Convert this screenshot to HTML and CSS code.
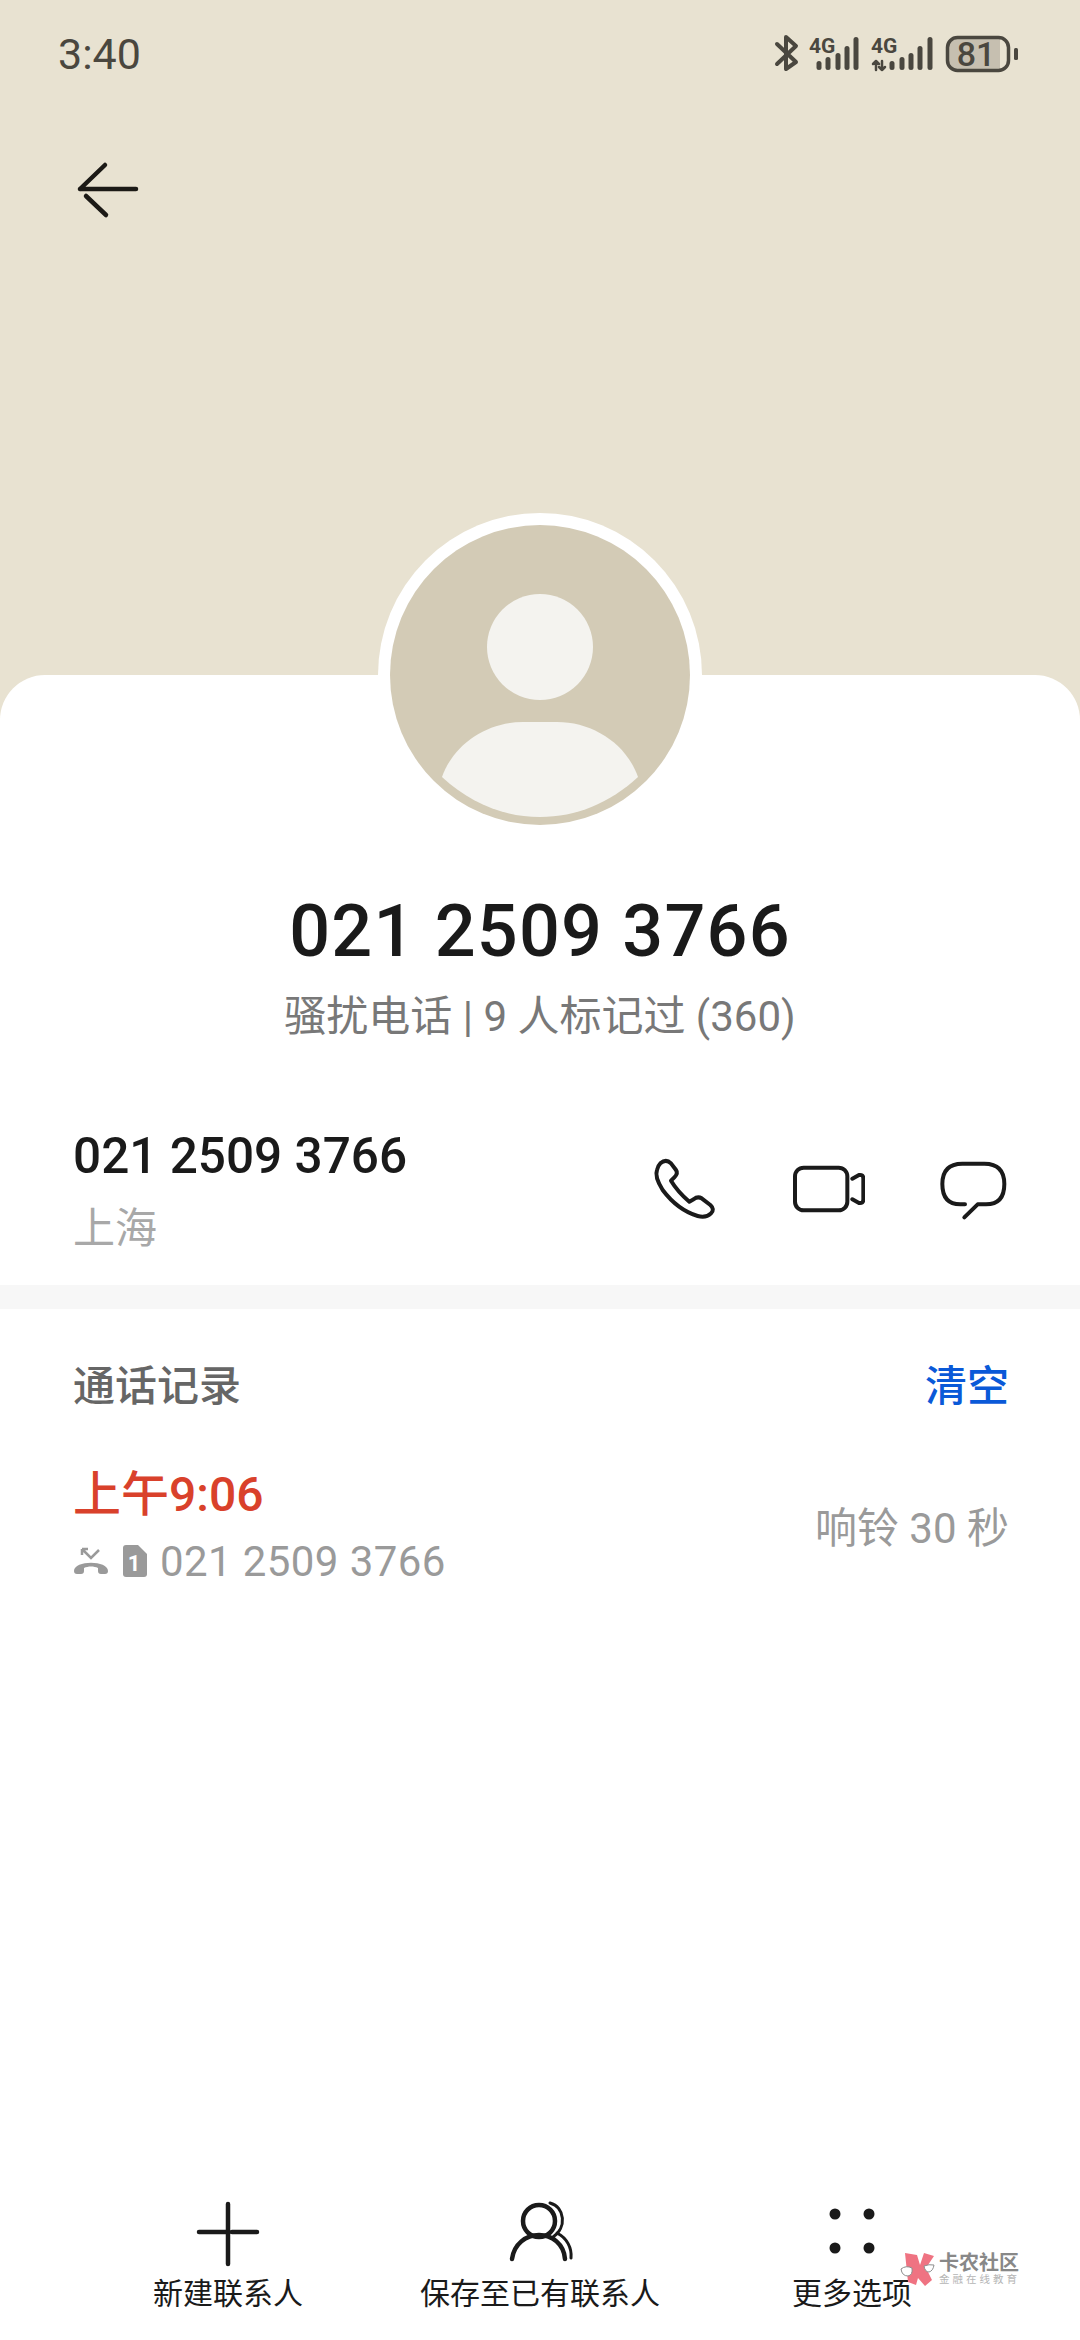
FILE: index.html
```html
<!DOCTYPE html>
<html lang="zh-CN">

<head>
    <meta charset="UTF-8">
    <meta name="viewport" content="width=device-width, initial-scale=1.0">
    <title>021 2509 3766</title>
    <link rel="stylesheet" href="styles.css">
</head>

<body>
    <div class="page">
        <header class="top">
            <div class="status">
                <span class="time">3:40</span>
                <svg class="status-icons" width="300" height="70" viewBox="740 20 300 70">
                    <!-- bluetooth -->
                    <path class="bt" d="M777 44 L796 62 L786 69 L786 37 L796 46 L777 64" />
                    <!-- first sim -->
                    <text class="net" x="809" y="53">4G</text>
                    <rect class="bar" x="816.5" y="61" width="5" height="9" rx="2.5" />
                    <rect class="bar" x="825.5" y="57" width="5" height="13" rx="2.5" />
                    <rect class="bar" x="835.5" y="53" width="5" height="17" rx="2.5" />
                    <rect class="bar" x="844.5" y="46" width="5" height="24" rx="2.5" />
                    <rect class="bar" x="853.5" y="37" width="5" height="33" rx="2.5" />
                    <!-- second sim -->
                    <text class="net" x="871" y="53">4G</text>
                    <path class="arrows" d="M876 70 V61 M873 64 L876 61 L879 64 M882 61 V70 M879 67 L882 70 L885 67" />
                    <rect class="bar" x="889.5" y="61" width="5" height="9" rx="2.5" />
                    <rect class="bar" x="899.5" y="57" width="5" height="13" rx="2.5" />
                    <rect class="bar" x="908.5" y="53" width="5" height="17" rx="2.5" />
                    <rect class="bar" x="917.5" y="46" width="5" height="24" rx="2.5" />
                    <rect class="bar" x="927.5" y="37" width="5" height="33" rx="2.5" />
                    <!-- battery -->
                    <path class="batt-fill" d="M958 38 H1000 V69 H958 Q948 69 948 59 V48 Q948 38 958 38 Z" />
                    <rect class="batt" x="947.5" y="37.5" width="61" height="33" rx="10" />
                    <rect class="bar" x="1014" y="48" width="4" height="12" rx="1.5" />
                    <text class="batt-text" x="976" y="66">81</text>
                </svg>
            </div>
            <svg class="back" width="72" height="72" viewBox="0 0 72 72">
                <path d="M11 36 H67 M11 36 L36 12 M17 43 L37 62" />
            </svg>
        </header>

        <main class="card">
            <svg class="avatar" width="324" height="324" viewBox="0 0 324 324">
                <circle cx="162" cy="162" r="162" fill="#ffffff" />
                <circle cx="162" cy="162" r="150" fill="#d3cbb6" />
                <circle cx="162" cy="134" r="53" fill="#f4f3ef" />
                <path d="M64 264 C76 230 110 209 145 209 H179 C214 209 248 230 260 264 C232 290 198 304 162 304 C126 304 92 290 64 264 Z" fill="#f4f3ef" />
            </svg>

            <h1 class="title">021 2509 3766</h1>
            <p class="sub">骚扰电话 | 9 人标记过 (360)</p>

            <section class="contact">
                <div class="contact-text">
                    <div class="num">021 2509 3766</div>
                    <div class="place">上海</div>
                </div>
                <div class="actions">
                    <svg class="act" viewBox="84 99 216 216">
                        <path d="M118 130 Q135 115 150 130 L165 150 Q172 160 160 172 L150 182 Q170 215 205 245 L218 238 Q230 228 242 235 L268 255 Q282 268 270 280 Q255 295 230 288 Q170 270 125 210 Q100 170 108 150 Q110 138 118 130 Z" />
                    </svg>
                    <svg class="act" viewBox="516 99 216 216">
                        <rect x="522" y="143" width="157" height="128" rx="26" />
                        <path d="M694 176 L714 165 Q727 163 727 176 V238 Q727 251 714 249 L694 238" />
                    </svg>
                    <svg class="act" viewBox="948 99 216 216">
                        <path d="M1032 253 H1018 Q964 253 964 192 Q964 131 1024 131 H1090 Q1150 131 1150 192 Q1150 253 1095 253 H1070 L1030 292" />
                    </svg>
                </div>
            </section>

            <div class="divider"></div>

            <section class="log">
                <div class="log-head">
                    <span class="log-title">通话记录</span>
                    <span class="clear">清空</span>
                </div>
                <div class="log-row">
                    <div>
                        <div class="log-time">上午9:06</div>
                        <div class="log-detail">
                            <svg class="missed" width="36" height="28" viewBox="0 0 36 28">
                                <path class="missed-arrow" d="M9 2 L18 11 L26 3 M9 2 H15 M9 2 V8" />
                                <path d="M1 24 C1 13 35 13 35 24 Q35 27 32 27 H28 Q25 27 25 24 V21 C21 19 15 19 11 21 V24 Q11 27 8 27 H4 Q1 27 1 24 Z" />
                            </svg>
                            <svg class="sim" width="24" height="32" viewBox="0 0 24 32">
                                <path d="M3 0 H15 L24 9 V29 Q24 32 21 32 H3 Q0 32 0 29 V3 Q0 0 3 0 Z" />
                                <text x="11" y="26">1</text>
                            </svg>
                            <span class="log-num">021 2509 3766</span>
                        </div>
                    </div>
                    <span class="ring">响铃 30 秒</span>
                </div>
            </section>

            <footer class="bottom">
                <div class="tool">
                    <svg class="tool-icon" viewBox="0 0 72 72">
                        <path d="M36 8 V68 M7 36 H34 M40 36 H65" />
                    </svg>
                    <span>新建联系人</span>
                </div>
                <div class="tool">
                    <svg class="tool-icon" viewBox="504 2196 72 72">
                        <circle cx="539" cy="2221" r="16" />
                        <path d="M512 2259 C514 2244 526 2235 539 2235 C552 2235 564 2244 565 2259" />
                        <path class="thin" d="M550 2203 C565 2207 567 2228 553 2237 M557 2233 C567 2238 572 2248 571 2258" />
                    </svg>
                    <span>保存至已有联系人</span>
                </div>
                <div class="tool">
                    <svg class="tool-icon" viewBox="0 0 72 72">
                        <circle cx="19" cy="18" r="5.5" />
                        <circle cx="53" cy="18" r="5.5" />
                        <circle cx="19" cy="52" r="5.5" />
                        <circle cx="53" cy="52" r="5.5" />
                    </svg>
                    <span>更多选项</span>
                </div>
            </footer>

            <div class="mark">
                <svg width="36" height="36" viewBox="0 0 36 36">
                    <path d="M5 1 L17 3 L20 13 L24 1 L34 4 L26 16 L32 28 L25 34 L18 26 L16 33 L8 30 Z" fill="#ef7382" />
                    <path d="M1 17 Q6 13 12 16 Q13 23 8 24 Q2 24 1 17 Z M24 14 Q29 12 34 13 Q33 19 29 20 Q25 20 24 14 Z" fill="#ffffff" stroke="#8d8d8d" stroke-width="1" />
                </svg>
                <div class="mark-text">
                    <span class="mark-big">卡农社区</span>
                    <span class="mark-small">金融在线教育</span>
                </div>
            </div>
        </main>
    </div>
</body>

</html>
```
FILE: styles.css
```css
* {
    box-sizing: border-box;
}

body {
    margin: 0;
    background-color: #ffffff;
    font-family: Roboto, "Noto Sans CJK SC", sans-serif;
}

.page {
    width: 1080px;
    height: 2340px;
    display: flex;
    flex-direction: column;
    overflow: hidden;
    background-color: #e8e2d1;
}

/* top area */
.top {
    height: 675px;
    flex: none;
}

.status {
    height: 110px;
    padding: 20px 40px 0 58px;
    display: flex;
    justify-content: space-between;
    align-items: flex-start;
}

.time {
    font-size: 43px;
    line-height: 68px;
    color: #4a473f;
}

.status-icons {
    display: block;
}

.bt,
.arrows {
    fill: none;
    stroke: #4a473f;
    stroke-width: 4;
    stroke-linecap: round;
    stroke-linejoin: round;
}

.arrows {
    stroke-width: 2.5;
}

.bar {
    fill: #4a473f;
}

.net {
    font-size: 21px;
    font-weight: 700;
    fill: #4a473f;
}

.batt {
    fill: none;
    stroke: #4a473f;
    stroke-width: 3.5;
}

.batt-fill {
    fill: #c6bfb0;
}

.batt-text {
    font-size: 34px;
    font-weight: 500;
    fill: #4a473f;
    text-anchor: middle;
}

.back {
    display: block;
    margin-left: 69px;
    margin-top: 43px;
    fill: none;
    stroke: #1c1a16;
    stroke-width: 4.5;
    stroke-linecap: round;
    stroke-linejoin: round;
}

/* white card */
.card {
    position: relative;
    flex: 1;
    display: flex;
    flex-direction: column;
    padding-top: 209px;
    background-color: #ffffff;
    border-radius: 45px 45px 0 0;
}

.avatar {
    position: absolute;
    left: 378px;
    top: -162px;
}

.title {
    margin: 0;
    text-align: center;
    font-size: 72px;
    line-height: 96px;
    font-weight: 500;
    letter-spacing: 1.2px;
    color: #1a1a1a;
}

.sub {
    margin: 7px 0 0;
    text-align: center;
    font-size: 42px;
    line-height: 60px;
    color: #787878;
}

.contact {
    margin-top: 76px;
    padding: 0 71px 0 73px;
    display: flex;
    justify-content: space-between;
    align-items: center;
}

.num {
    font-size: 49.5px;
    line-height: 66px;
    font-weight: 500;
    color: #1a1a1a;
}

.place {
    margin-top: 10px;
    font-size: 42px;
    line-height: 60px;
    color: #a8a8a8;
}

.actions {
    display: flex;
    gap: 72px;
    margin-bottom: 4px;
}

.act {
    width: 72px;
    height: 72px;
    fill: none;
    stroke: #1a1a1a;
    stroke-width: 12;
    stroke-linecap: round;
    stroke-linejoin: round;
}

.divider {
    height: 24px;
    margin-top: 26px;
    background-color: #f7f7f7;
}

/* call log */
.log {
    padding: 0 71px 0 73px;
}

.log-head {
    margin-top: 48px;
    display: flex;
    justify-content: space-between;
    align-items: center;
    line-height: 60px;
    font-size: 42px;
}

.log-title {
    color: #666666;
    font-weight: 500;
}

.clear {
    color: #0a59d8;
    font-weight: 500;
}

.log-row {
    margin-top: 45px;
    display: flex;
    justify-content: space-between;
    align-items: center;
}

.log-time {
    font-size: 48px;
    line-height: 66px;
    font-weight: 500;
    color: #d9412b;
}

.log-detail {
    margin-top: 4px;
    display: flex;
    align-items: center;
    height: 58px;
}

.missed {
    fill: #9a9a9a;
}

.missed-arrow {
    fill: none;
    stroke: #9a9a9a;
    stroke-width: 2.5;
}

.sim {
    margin-left: 14px;
    fill: #9a9a9a;
}

.sim text {
    font-size: 22px;
    font-weight: 700;
    fill: #ffffff;
    text-anchor: middle;
}

.log-num {
    margin-left: 13px;
    font-size: 42px;
    letter-spacing: 0.4px;
    color: #9a9a9a;
}

.ring {
    margin-bottom: 4px;
    font-size: 42px;
    color: #9a9a9a;
}

/* bottom toolbar */
.bottom {
    margin-top: auto;
    padding: 0 72px 26px;
    display: grid;
    grid-template-columns: repeat(3, 312px);
}

.tool {
    display: flex;
    flex-direction: column;
    align-items: center;
    font-size: 30px;
    line-height: 40px;
    color: #1a1a1a;
}

.tool-icon {
    display: block;
    width: 72px;
    height: 72px;
    margin-bottom: 6px;
    fill: none;
    stroke: #1a1a1a;
    stroke-width: 4.5;
    stroke-linecap: round;
}

.tool-icon circle[r="5.5"] {
    fill: #1a1a1a;
    stroke: none;
}

.thin {
    stroke-width: 3;
}

/* watermark over the toolbar */
.mark {
    position: absolute;
    left: 900px;
    top: 1577px;
    display: flex;
    gap: 3px;
}

.mark-text {
    display: flex;
    flex-direction: column;
}

.mark-big {
    font-size: 20px;
    line-height: 22px;
    font-weight: 700;
    color: #888888;
}

.mark-small {
    font-size: 10.5px;
    line-height: 12px;
    letter-spacing: 3px;
    color: #b5b5b5;
}
```
